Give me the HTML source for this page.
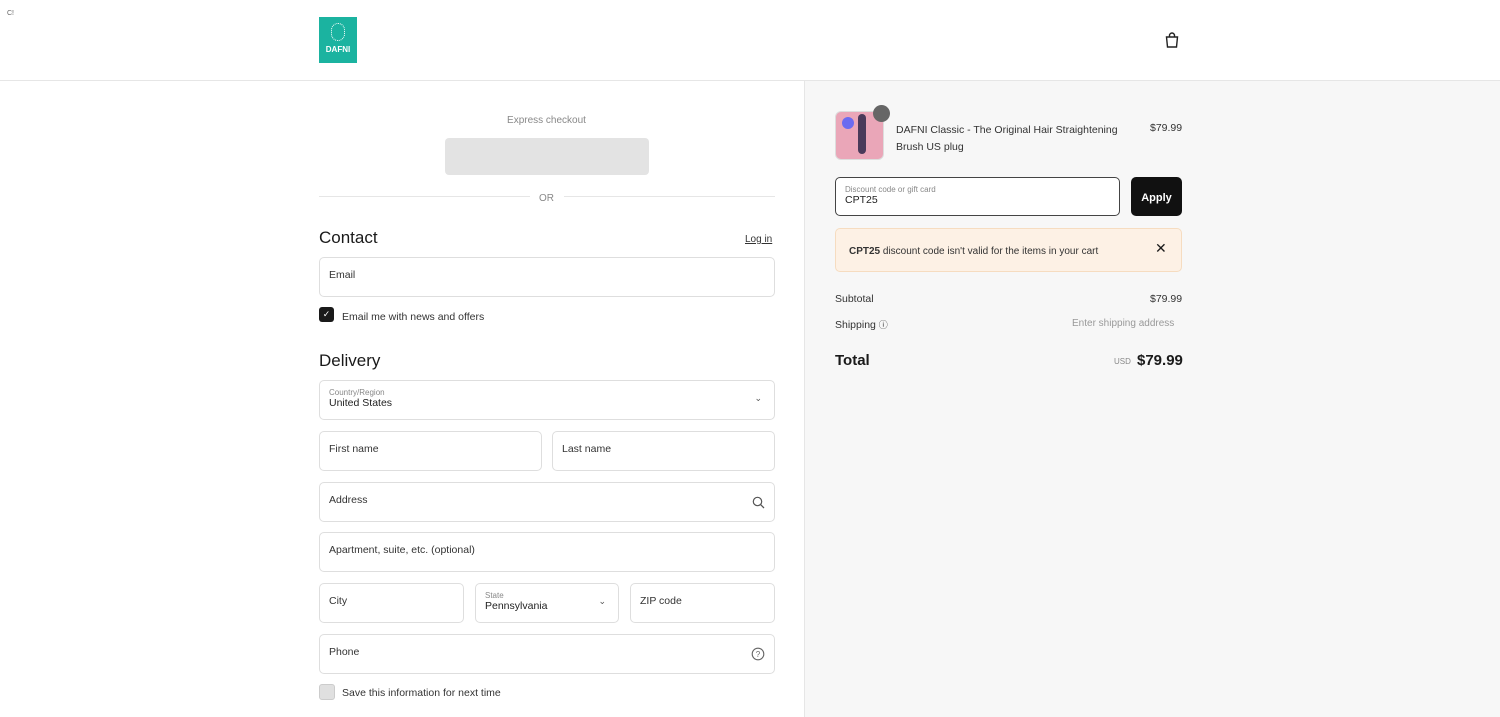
<!DOCTYPE html>
<html><head><style>
*{box-sizing:border-box;margin:0;padding:0}
body{width:1500px;height:717px;overflow:hidden;background:#fff;font-family:"Liberation Sans",sans-serif;color:#1a1a1a;position:relative}
.a{position:absolute}
.f{position:absolute;border:1px solid #dedede;border-radius:5px;background:#fff;height:40px}
.f span{position:absolute;left:9px;top:11px;font-size:10.5px;color:#333}
.lab{position:absolute;left:9px;top:7px;font-size:8px;color:#888}
.val{position:absolute;left:9px;top:16px;font-size:10.5px;color:#222}
.t{font-size:10.5px;color:#333}
</style></head><body>
<div class="a" style="left:7px;top:10px;font-size:7px;color:#666">C!</div>
<div class="a" style="left:319px;top:17px;width:38px;height:46px;background:#1bb3a0;color:#fff;font-size:8px;font-weight:bold;text-align:center">
<div style="width:14px;height:18px;margin:6px auto 4px;border:1px dotted #fff;border-radius:7px"></div>DAFNI</div>
<svg class="a" style="left:1164px;top:32px" width="16" height="17" viewBox="0 0 16 17"><path d="M2.5 5h11l-1 10h-9z M5.5 5V3.5a2.5 2.5 0 0 1 5 0V5" fill="none" stroke="#222" stroke-width="1.4"/></svg>
<div class="a" style="left:0;top:80px;width:1500px;height:1px;background:#e6e6e6"></div>
<div class="a" style="left:804px;top:81px;width:696px;height:636px;background:#f7f7f7;border-left:1px solid #e6e6e6"></div>
<div class="a" style="left:319px;top:115px;width:455px;text-align:center;font-size:10px;color:#888">Express checkout</div>
<div class="a" style="left:445px;top:138px;width:204px;height:37px;background:#e3e3e3;border-radius:4px"></div>
<div class="a" style="left:319px;top:196px;width:211px;height:1px;background:#e6e6e6"></div>
<div class="a" style="left:564px;top:196px;width:211px;height:1px;background:#e6e6e6"></div>
<div class="a" style="left:319px;top:193px;width:455px;text-align:center;font-size:10px;color:#888">OR</div>
<div class="a" style="left:319px;top:228px;font-size:17px;font-weight:500">Contact</div>
<div class="a" style="left:745px;top:234px;font-size:10px;text-decoration:underline;color:#333">Log in</div>
<div class="f" style="left:319px;top:257px;width:456px"><span>Email</span></div>
<div class="a" style="left:319px;top:307px;width:15px;height:15px;background:#1a1a1a;border-radius:3px;color:#fff;font-size:9px;text-align:center;line-height:15px">✓</div>
<div class="a t" style="left:342px;top:311px">Email me with news and offers</div>
<div class="a" style="left:319px;top:351px;font-size:17px;font-weight:500">Delivery</div>
<div class="f" style="left:319px;top:380px;width:456px"><div class="lab">Country/Region</div><div class="val">United States</div><div class="a" style="right:12px;top:12px;font-size:9px;color:#555">⌄</div></div>
<div class="f" style="left:319px;top:431px;width:223px"><span>First name</span></div>
<div class="f" style="left:552px;top:431px;width:223px"><span>Last name</span></div>
<div class="f" style="left:319px;top:482px;width:456px"><span>Address</span>
<svg class="a" style="right:9px;top:13px" width="13" height="13"><circle cx="5.5" cy="5.5" r="4.2" fill="none" stroke="#555" stroke-width="1.2"/><path d="M8.6 8.6L12 12" stroke="#555" stroke-width="1.3"/></svg></div>
<div class="f" style="left:319px;top:532px;width:456px"><span>Apartment, suite, etc. (optional)</span></div>
<div class="f" style="left:319px;top:583px;width:145px"><span>City</span></div>
<div class="f" style="left:475px;top:583px;width:144px"><div class="lab">State</div><div class="val">Pennsylvania</div><div class="a" style="right:12px;top:12px;font-size:9px;color:#555">⌄</div></div>
<div class="f" style="left:630px;top:583px;width:145px"><span>ZIP code</span></div>
<div class="f" style="left:319px;top:634px;width:456px"><span>Phone</span>
<svg class="a" style="right:9px;top:12px" width="14" height="14"><circle cx="7" cy="7" r="5.8" fill="none" stroke="#666" stroke-width="1.1"/><text x="7" y="10" font-size="8" text-anchor="middle" fill="#666" font-family="Liberation Sans">?</text></svg></div>
<div class="a" style="left:319px;top:684px;width:16px;height:16px;background:#e0e0e0;border:1px solid #ccc;border-radius:3px"></div>
<div class="a t" style="left:342px;top:687px">Save this information for next time</div>

<div class="a" style="left:835px;top:111px;width:49px;height:49px;background:#eaa6b8;border-radius:6px;border:1px solid #ddd"></div>
<div class="a" style="left:842px;top:117px;width:12px;height:12px;background:#6b6bf0;border-radius:6px"></div>
<div class="a" style="left:858px;top:114px;width:8px;height:40px;background:#4a3a5a;border-radius:4px"></div>
<div class="a" style="left:873px;top:105px;width:17px;height:17px;background:#666;border-radius:50%"></div>
<div class="a t" style="left:896px;top:122px;line-height:17px;width:235px">DAFNI Classic - The Original Hair Straightening Brush US plug</div>
<div class="a t" style="left:1150px;top:122px">$79.99</div>
<div class="a" style="left:835px;top:177px;width:285px;height:39px;border:1px solid #444;border-radius:5px;background:#fff"><div class="lab">Discount code or gift card</div><div class="val">CPT25</div></div>
<div class="a" style="left:1131px;top:177px;width:51px;height:39px;background:#111;border-radius:5px;color:#fff;font-size:11px;font-weight:bold;text-align:center;line-height:42px">Apply</div>
<div class="a" style="left:835px;top:228px;width:347px;height:44px;background:#fdf1e5;border:1px solid #f6dcc0;border-radius:5px"></div>
<div class="a t" style="left:849px;top:246px;font-size:10px"><b>CPT25</b> discount code isn't valid for the items in your cart</div>
<div class="a" style="left:1155px;top:240px;font-size:14px">✕</div>
<div class="a t" style="left:835px;top:293px">Subtotal</div>
<div class="a t" style="left:1150px;top:293px">$79.99</div>
<div class="a t" style="left:835px;top:318px">Shipping <span style="font-size:9px">ⓘ</span></div>
<div class="a t" style="left:1072px;top:318px;color:#999;font-size:10px">Enter shipping address</div>
<div class="a" style="left:835px;top:352px;font-size:15px;font-weight:bold">Total</div>
<div class="a" style="left:1114px;top:357px;font-size:8px;color:#888">USD</div>
<div class="a" style="left:1137px;top:352px;font-size:15px;font-weight:bold">$79.99</div>
</body></html>
